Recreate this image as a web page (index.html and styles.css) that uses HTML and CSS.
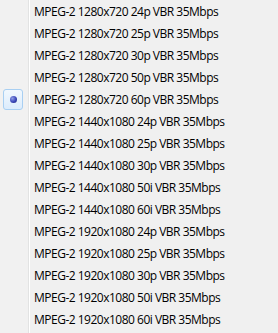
FILE: index.html
```html
<!DOCTYPE html>
<html lang="en">
<head>
    <meta charset="UTF-8">
    <title>Formats</title>
    <link rel="stylesheet" href="styles.css">
</head>
<body>

<ul class="menu">
    <li class="item"><span class="check"></span><span class="label">MPEG-2 1280x720 24p VBR 35Mbps</span></li>
    <li class="item"><span class="check"></span><span class="label">MPEG-2 1280x720 25p VBR 35Mbps</span></li>
    <li class="item"><span class="check"></span><span class="label">MPEG-2 1280x720 30p VBR 35Mbps</span></li>
    <li class="item"><span class="check"></span><span class="label">MPEG-2 1280x720 50p VBR 35Mbps</span></li>
    <li class="item selected"><span class="check"><span class="dot"></span></span><span class="label">MPEG-2 1280x720 60p VBR 35Mbps</span></li>
    <li class="item"><span class="check"></span><span class="label">MPEG-2 1440x1080 24p VBR 35Mbps</span></li>
    <li class="item"><span class="check"></span><span class="label">MPEG-2 1440x1080 25p VBR 35Mbps</span></li>
    <li class="item"><span class="check"></span><span class="label">MPEG-2 1440x1080 30p VBR 35Mbps</span></li>
    <li class="item"><span class="check"></span><span class="label">MPEG-2 1440x1080 50i VBR 35Mbps</span></li>
    <li class="item"><span class="check"></span><span class="label">MPEG-2 1440x1080 60i VBR 35Mbps</span></li>
    <li class="item"><span class="check"></span><span class="label">MPEG-2 1920x1080 24p VBR 35Mbps</span></li>
    <li class="item"><span class="check"></span><span class="label">MPEG-2 1920x1080 25p VBR 35Mbps</span></li>
    <li class="item"><span class="check"></span><span class="label">MPEG-2 1920x1080 30p VBR 35Mbps</span></li>
    <li class="item"><span class="check"></span><span class="label">MPEG-2 1920x1080 50i VBR 35Mbps</span></li>
    <li class="item"><span class="check"></span><span class="label">MPEG-2 1920x1080 60i VBR 35Mbps</span></li>
</ul>

</body>
</html>
```

FILE: styles.css
```css
body {
    margin: 0;
    background-color: #f0f0f0;
    font-family: "Open Sans", "Noto Sans", sans-serif;
    font-size: 12px;
    color: #000;
}
.menu {
    list-style: none;
    margin: 0;
    padding: 0;
    width: 278px;
    height: 333px;
    background: linear-gradient(to right, #f1f1f1 0, #f1f1f1 28px, #e2e3e3 28px, #e2e3e3 29px, #fff 29px, #fff 30px, #f0f0f0 30px);
}
.item {
    display: flex;
    align-items: center;
    height: 22px;
}
.check {
    width: 20px;
    height: 21px;
    margin-left: 3px;
    margin-right: 11px;
    box-sizing: border-box;
    border-radius: 3px;
    display: flex;
    align-items: center;
    justify-content: center;
}
.selected .check {
    border: 1px solid #a8cff2;
    background: linear-gradient(to bottom, #f1f8fe, #dcecfc);
}
.dot {
    width: 7px;
    height: 7px;
    border-radius: 50%;
    background: radial-gradient(circle at 35% 35%, #8f9ee8 0, #3a46b8 55%, #1b2378 100%);
}
.label {
    white-space: nowrap;
    letter-spacing: -0.5px;
}
```
